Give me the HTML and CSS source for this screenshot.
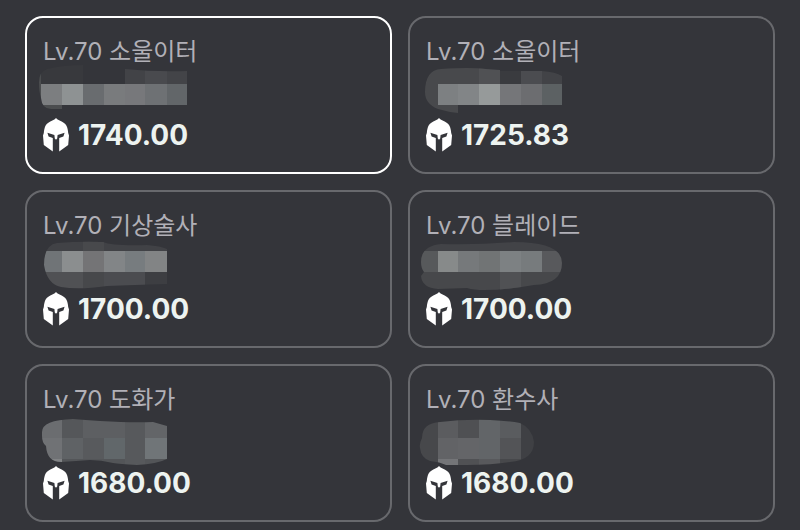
FILE: index.html
```html
<!DOCTYPE html>
<html lang="ko">
<head>
  <meta charset="UTF-8">
  <meta name="viewport" content="width=device-width, initial-scale=1">
  <title>캐릭터 목록</title>
  <link rel="stylesheet" href="styles.css">
</head>
<body>
  <svg class="defs" aria-hidden="true">
    <symbol id="helmet" viewBox="0 0 26 34">
      <path fill="#fff" d="M13 0C14.600 1.800 16.500 2.400 18.700 3.400C21.500 4.700 23.600 7 24.200 9.500C24.800 11.500 25 13 25.200 15L26 17.500L25.200 27L16.200 33.500V20L20.400 18.600L21.600 14.800L14.600 17L14.200 20.600L13 21.800L11.800 20.600L11.400 17L4.400 14.800L5.600 18.600L9.800 20V33.500L.800 27L0 17.500L.800 15C1 13 1.200 11.500 1.800 9.500C2.400 7 4.500 4.700 7.300 3.400C9.500 2.400 11.400 1.800 13 0Z"/>
    </symbol>
  </svg>

  <main class="characters">
    <button type="button" class="card selected" aria-pressed="true">
      <span class="class-name">Lv.70 소울이터</span>
      <svg class="mosaic" aria-hidden="true">
        <clipPath id="blob1"><path d="M-4 14Q-4 4 4 1Q20 -3 40 -3V3H82V1Q112 4 144 3V37H19V41H8Q-1 41 -2 30Q-4 24 -4 14Z"/></clipPath>
        <g clip-path="url(#blob1)">
          <path fill="#38393d" d="M-8 -6H40V16H-8z"/>
          <path fill="#4b4d4f" d="M-8 4H-2V50H-8zM-2 37H19V50H-2z"/>
          <path fill="#424347" d="M82 0H102V16H82z"/>
          <path fill="#494a4e" d="M102 0H124V16H102z"/>
          <path fill="#434448" d="M124 0H144V16H124z"/>
          <path fill="#7c7e80" d="M-2 16H19V37H-2z"/>
          <path fill="#8e9293" d="M19 16H40V37H19z"/>
          <path fill="#696c6f" d="M40 16H61V37H40z"/>
          <path fill="#797b7d" d="M61 16H82V37H61z"/>
          <path fill="#77787b" d="M82 16H102V37H82z"/>
          <path fill="#6e7174" d="M102 16H124V37H102z"/>
          <path fill="#626669" d="M124 16H144V37H124z"/>
        </g>
      </svg>
      <span class="item-level"><svg class="helmet" aria-hidden="true"><use href="#helmet"/></svg>1740.00</span>
    </button>

    <button type="button" class="card" aria-pressed="false">
      <span class="class-name">Lv.70 소울이터</span>
      <svg class="mosaic" aria-hidden="true">
        <clipPath id="blob2"><path d="M-1 24Q-1 2 15 1Q44 -1 60 1L74 2V3H116Q130 4 136 8V37H32V45Q22 44 12 41Q-1 36 -1 24Z"/></clipPath>
        <g clip-path="url(#blob2)">
          <path fill="#48494c" d="M-8 -2H12V50H-8zM12 -2H53V16H12zM12 37H32V50H12z"/>
          <path fill="#505154" d="M53 -2H74V16H53z"/>
          <path fill="#3a3b3f" d="M74 -2H95V16H74z"/>
          <path fill="#4b4c50" d="M95 -2H116V16H95z"/>
          <path fill="#424347" d="M116 -2H136V16H116z"/>
          <path fill="#7d8082" d="M12 16H32V37H12z"/>
          <path fill="#828587" d="M32 16H53V37H32z"/>
          <path fill="#969a9a" d="M53 16H74V37H53z"/>
          <path fill="#757679" d="M74 16H95V37H74z"/>
          <path fill="#6c6d70" d="M95 16H116V37H95z"/>
          <path fill="#5c6163" d="M116 16H136V37H116z"/>
        </g>
      </svg>
      <span class="item-level"><svg class="helmet" aria-hidden="true"><use href="#helmet"/></svg>1725.83</span>
    </button>

    <button type="button" class="card" aria-pressed="false">
      <span class="class-name">Lv.70 기상술사</span>
      <svg class="mosaic" aria-hidden="true">
        <clipPath id="blob3"><path d="M1 23Q1 3 14 1Q38 -1 60 0Q70 4 104 3Q118 4 124 7V42Q90 43 64 44Q36 48 18 45Q4 42 1 23Z"/></clipPath>
        <g clip-path="url(#blob3)">
          <path fill="#414246" d="M-2 -2H124V9H-2z"/>
          <path fill="#48494c" d="M40 -2H61V9H40z"/>
          <path fill="#505154" d="M-2 30H40V50H-2z"/>
          <path fill="#47484b" d="M40 30H61V50H40z"/>
          <path fill="#4b4c50" d="M61 30H102V50H61z"/>
          <path fill="#3d3e42" d="M102 30H124V50H102z"/>
          <path fill="#707477" d="M-2 9H19V30H-2z"/>
          <path fill="#8b8e8f" d="M19 9H40V30H19z"/>
          <path fill="#747476" d="M40 9H61V30H40z"/>
          <path fill="#828587" d="M61 9H82V30H61z"/>
          <path fill="#777c7f" d="M82 9H102V30H82z"/>
          <path fill="#828485" d="M102 9H124V30H102z"/>
        </g>
      </svg>
      <span class="item-level"><svg class="helmet" aria-hidden="true"><use href="#helmet"/></svg>1700.00</span>
    </button>

    <button type="button" class="card" aria-pressed="false">
      <span class="class-name">Lv.70 블레이드</span>
      <svg class="mosaic" aria-hidden="true">
        <clipPath id="blob4"><path d="M-5 20Q-5 4 15 2Q50 3 88 0Q136 0 136 21Q136 42 108 43Q80 48 58 48Q48 48 41 46L12 47Q-4 46 -5 34L-2 30Q-5 26 -5 20Z"/></clipPath>
        <g clip-path="url(#blob4)">
          <path fill="#424347" d="M-8 -2H140V9H-8z"/>
          <path fill="#47484b" d="M-8 30H140V50H-8z"/>
          <path fill="#505154" d="M74 30H95V50H74z"/>
          <path fill="#57595b" d="M-8 9H12V30H-8z"/>
          <path fill="#878a8a" d="M12 9H32V30H12z"/>
          <path fill="#76797b" d="M32 9H53V30H32z"/>
          <path fill="#717475" d="M53 9H74V30H53z"/>
          <path fill="#7d8183" d="M74 9H95V30H74z"/>
          <path fill="#777b7d" d="M95 9H116V30H95z"/>
          <path fill="#58595c" d="M116 9H140V30H116z"/>
        </g>
      </svg>
      <span class="item-level"><svg class="helmet" aria-hidden="true"><use href="#helmet"/></svg>1700.00</span>
    </button>

    <button type="button" class="card" aria-pressed="false">
      <span class="class-name">Lv.70 도화가</span>
      <svg class="mosaic" aria-hidden="true">
        <clipPath id="blob5"><path d="M-1 16Q-1 4 30 3Q42 4 57 5Q90 7 110 6L124 10V43Q114 48 94 49Q76 48 70 47Q58 44 47 44Q34 45 18 46Q4 46 3 30Q-1 27 -1 20Z"/></clipPath>
        <g clip-path="url(#blob5)">
          <path fill="#6b6d70" d="M-4 0H19V22H-4z"/>
          <path fill="#55575a" d="M19 0H40V22H19z"/>
          <path fill="#5d5f62" d="M40 0H82V22H40z"/>
          <path fill="#57595c" d="M82 0H102V50H82z"/>
          <path fill="#636568" d="M102 0H124V22H102z"/>
          <path fill="#707275" d="M-4 22H19V43H-4z"/>
          <path fill="#5f6265" d="M19 22H40V43H19z"/>
          <path fill="#585a5d" d="M40 22H61V43H40z"/>
          <path fill="#61676a" d="M61 22H82V43H61z"/>
          <path fill="#707578" d="M102 22H124V43H102z"/>
          <path fill="#818385" d="M-4 43H19V50H-4z"/>
          <path fill="#535558" d="M19 43H82V50H19zM102 43H124V50H102z"/>
        </g>
      </svg>
      <span class="item-level"><svg class="helmet" aria-hidden="true"><use href="#helmet"/></svg>1680.00</span>
    </button>

    <button type="button" class="card" aria-pressed="false">
      <span class="class-name">Lv.70 환수사</span>
      <svg class="mosaic" aria-hidden="true">
        <clipPath id="blob6"><path d="M-6 32Q-7 28 -4 22Q-4 7 14 6Q38 3 64 4Q84 5 94 7Q106 12 108 26Q108 44 84 46Q66 49 40 49H20Q14 46 4 45Q-5 42 -6 32Z"/></clipPath>
        <g clip-path="url(#blob6)">
          <path fill="#47484b" d="M-8 0H12V50H-8z"/>
          <path fill="#5b5c5f" d="M12 0H32V22H12z"/>
          <path fill="#4f5053" d="M32 0H53V22H32z"/>
          <path fill="#626568" d="M53 0H74V43H53z"/>
          <path fill="#5a5c5f" d="M74 0H95V22H74z"/>
          <path fill="#3f4044" d="M95 0H112V50H95z"/>
          <path fill="#626366" d="M12 22H32V43H12z"/>
          <path fill="#646568" d="M32 22H53V43H32z"/>
          <path fill="#535457" d="M74 22H95V43H74z"/>
          <path fill="#747578" d="M12 43H32V50H12z"/>
          <path fill="#505154" d="M32 43H53V50H32z"/>
          <path fill="#58595c" d="M53 43H74V50H53z"/>
          <path fill="#47484b" d="M74 43H95V50H74z"/>
        </g>
      </svg>
      <span class="item-level"><svg class="helmet" aria-hidden="true"><use href="#helmet"/></svg>1680.00</span>
    </button>
  </main>
</body>
</html>
```
FILE: styles.css
```css
body {
  margin: 0;
  background-color: #34353a;
  font-family: Inter, "Noto Sans CJK KR", sans-serif;
}
.defs {
  display: none;
}
.characters {
  display: grid;
  grid-template-columns: 1fr 1fr;
  gap: 16px;
  padding: 16px 25px 8px;
}
.card {
  display: flex;
  flex-direction: column;
  align-items: flex-start;
  padding: 16px 16px 19px;
  border: 2px solid #68696d;
  border-radius: 18px;
  background: none;
  font-family: inherit;
  text-align: left;
  cursor: pointer;
}
.card.selected {
  border-color: #fff;
}
.class-name {
  padding-top: 1px;
  font-size: 24px;
  line-height: 33px;
  color: #b1b0b7;
}
/* blurred-out nickname */
.mosaic {
  width: 144px;
  height: 49px;
  overflow: visible;
}
.item-level {
  display: flex;
  align-items: center;
  gap: 9px;
  font-size: 28px;
  font-weight: 700;
  line-height: 36px;
  color: #edf3f0;
}
.helmet {
  width: 26px;
  height: 34px;
}
```
